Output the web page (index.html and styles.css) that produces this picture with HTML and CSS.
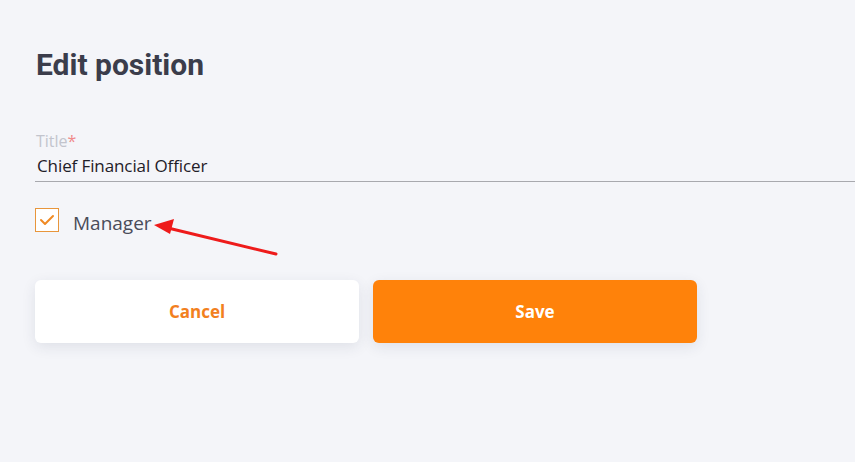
FILE: index.html
```html
<!DOCTYPE html>
<html>
<head>
<meta charset="utf-8">
<link rel="stylesheet" href="styles.css">
</head>
<body>
<div class="page">
  <h1 class="heading">Edit position</h1>
  <div class="field">
    <label class="field-label">Title<span class="req">*</span></label>
    <div class="field-value">Chief Financial Officer</div>
  </div>
  <div class="check-row">
    <span class="checkbox">
      <svg width="16" height="12" viewBox="0 0 16 12"><path d="M2 6 L6 10 L14 2" fill="none" stroke="#f08a24" stroke-width="2" stroke-linecap="round" stroke-linejoin="round"/></svg>
    </span>
    <span class="check-label">Manager</span>
  </div>
  <div class="actions">
    <button class="btn btn-cancel">Cancel</button>
    <button class="btn btn-save">Save</button>
  </div>
  <svg class="annot" width="855" height="462" viewBox="0 0 855 462">
    <line x1="276" y1="254" x2="168" y2="228" stroke="#ee1b1b" stroke-width="3" stroke-linecap="round"/>
    <polygon points="154,225 174,219 170,234" fill="#ee1b1b"/>
  </svg>
</div>
</body>
</html>
```
FILE: styles.css
```css
* { box-sizing: border-box; }
html, body { margin: 0; padding: 0; }
body {
  background: #f4f5f9;
  width: 855px;
  height: 462px;
  overflow: hidden;
  font-family: "Open Sans", "Noto Sans", sans-serif;
}
.page {
  position: relative;
  padding: 47px 0 0 35px;
  height: 462px;
}
.heading {
  margin: 0 0 0 1px;
  font-family: Roboto, sans-serif;
  font-weight: 700;
  font-size: 30px;
  line-height: 36px;
  color: #3b3d4b;
}
.field {
  margin-top: 48px;
  display: flex;
  flex-direction: column;
}
.field-label {
  font-size: 16px;
  line-height: 20px;
  color: #c2c4cd;
  padding-left: 1px;
}
.req { color: #f08a8a; }
.field-value {
  font-size: 17px;
  line-height: 24px;
  color: #1f2028;
  padding: 3px 0 3px 2px;
  border-bottom: 1px solid #a8a9ae;
  letter-spacing: -0.1px;
}
.check-row {
  margin-top: 26px;
  display: flex;
  align-items: flex-start;
  gap: 14px;
}
.checkbox {
  width: 24px;
  height: 24px;
  border: 1px solid #e8963c;
  background: #fff;
  display: flex;
  align-items: center;
  justify-content: center;
}
.check-label {
  font-size: 19px;
  color: #4a4c59;
  line-height: 24px;
  padding-top: 3px;
}
.actions {
  margin-top: 45px;
  display: flex;
  gap: 14px;
}
.btn {
  width: 324px;
  height: 63px;
  border: none;
  border-radius: 6px;
  font-family: "Open Sans", "Noto Sans", sans-serif;
  font-weight: 700;
  font-size: 17px;
  box-shadow: 0 4px 14px rgba(40, 50, 80, 0.10);
}
.btn-cancel { background: #fff; color: #f2801e; }
.btn-save { background: #ff820a; color: #fff; }
.annot {
  position: absolute;
  left: 0;
  top: 0;
  pointer-events: none;
}
```
